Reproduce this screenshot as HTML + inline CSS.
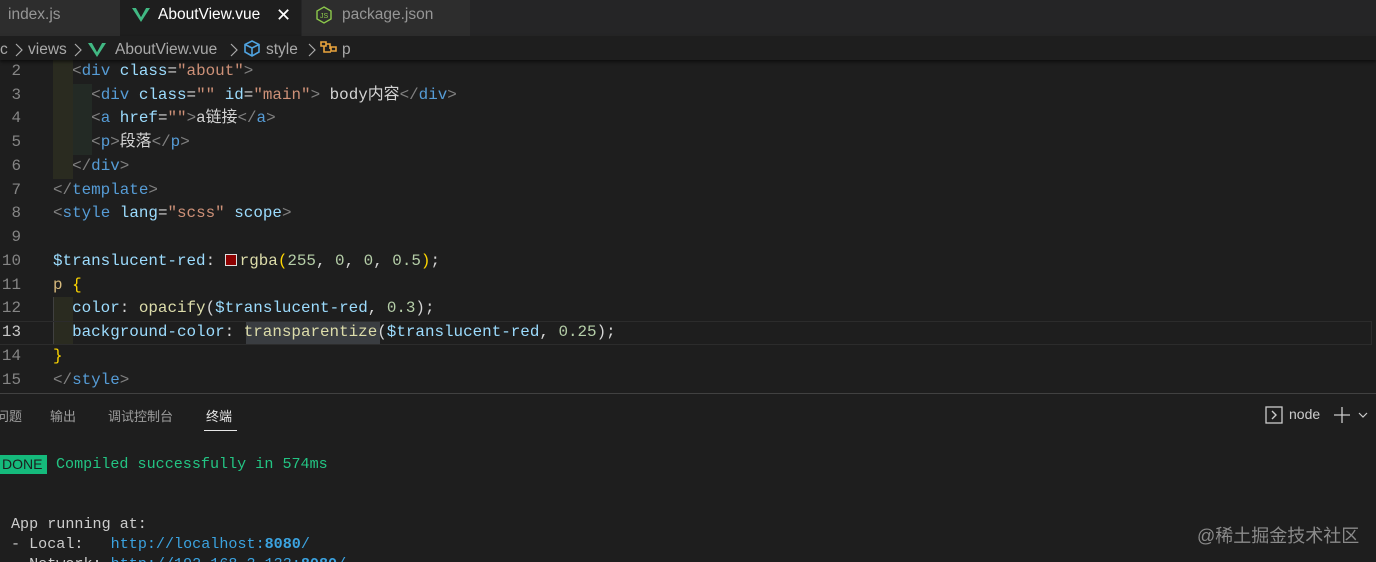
<!DOCTYPE html>
<html><head><meta charset="utf-8"><style>
*{margin:0;padding:0;box-sizing:border-box}
html,body{width:1376px;height:562px;overflow:hidden}
body{background:#1e1e1e;position:relative;font-family:"Liberation Sans","Noto Sans CJK SC",sans-serif;color:#ccc}
.tabs{position:absolute;left:0;top:0;width:1376px;height:36px;background:#252526}
.tab{position:absolute;top:0;height:36px;font-size:15.5px;line-height:30px;color:#969696}
.bc{position:absolute;top:36px;left:0;width:1376px;height:24px;background:#1e1e1e;font-size:15.5px;color:#a9a9a9;line-height:28px;box-shadow:0 2px 3px #0008;z-index:2}
.code{position:absolute;left:0;width:1376px;height:23.77px;font-family:"Liberation Mono","Noto Sans CJK SC",monospace;font-size:15.9px;line-height:23.77px;white-space:pre;color:#d4d4d4}
.ln{position:absolute;left:0;width:21px;text-align:right;color:#858585}
.tx{position:absolute;left:53px}
.g{color:#808080}.t{color:#569cd6}.a{color:#9cdcfe}.s{color:#ce9178}.f{color:#dcdcaa}.y{color:#ffd700}.sel{color:#d7ba7d}.n{color:#b5cea8}
.term{position:absolute;font-family:"Liberation Mono",monospace;font-size:15.1px;white-space:pre;color:#ccc}
.chev{position:absolute;top:7px}
</style></head><body>
<div class="tabs">
 <div class="tab" style="left:0;width:120px;background:#2d2d2d;padding-left:8px">index.js</div>
 <div class="tab" style="left:120px;width:181px;background:#1e1e1e;color:#fff;padding-left:38px">AboutView.vue<span style="position:absolute;left:156px;font-size:18px">✕</span>
  <svg style="position:absolute;left:12px;top:8px" width="18" height="14" viewBox="0 0 18 14"><path d="M0 0h4l5 9 5-9h4L9 14z" fill="#41b883"/><path d="M4 0h3l2 3.5L11 0h3L9 9z" fill="#1e1e1e"/></svg></div>
 <div class="tab" style="left:302px;width:168px;background:#2d2d2d;padding-left:40px">package.json
  <svg style="position:absolute;left:14px;top:6px" width="16" height="18" viewBox="0 0 16 18"><path d="M8 1l7 4v8l-7 4-7-4V5z" fill="none" stroke="#8cc84b" stroke-width="1.4"/><text x="4" y="12" font-size="7" fill="#8cc84b" font-family="Liberation Sans">JS</text></svg></div>
</div>
<div class="bc"><span style="position:absolute;left:0">c</span>
 <svg class="chev" style="left:15px" width="8" height="14" viewBox="0 0 8 14"><path d="M1 1l6 6-6 6" fill="none" stroke="#aaa" stroke-width="1.2"/></svg>
 <span style="position:absolute;left:28px">views</span>
 <svg class="chev" style="left:74px" width="8" height="14" viewBox="0 0 8 14"><path d="M1 1l6 6-6 6" fill="none" stroke="#aaa" stroke-width="1.2"/></svg>
 <svg style="position:absolute;left:88px;top:7px" width="18" height="14" viewBox="0 0 18 14"><path d="M0 0h4l5 9 5-9h4L9 14z" fill="#41b883"/><path d="M4 0h3l2 3.5L11 0h3L9 9z" fill="#1e1e1e"/></svg>
 <span style="position:absolute;left:115px">AboutView.vue</span>
 <svg class="chev" style="left:230px" width="8" height="14" viewBox="0 0 8 14"><path d="M1 1l6 6-6 6" fill="none" stroke="#aaa" stroke-width="1.2"/></svg>
 <svg style="position:absolute;left:243px;top:4px" width="18" height="17" viewBox="0 0 18 17"><path d="M9 1l7 3.5v7.5l-7 4-7-4V4.5z M2 4.5l7 3.5 7-3.5 M9 8v8" fill="none" stroke="#4fa3e0" stroke-width="1.6"/></svg>
 <span style="position:absolute;left:266px">style</span>
 <svg class="chev" style="left:308px" width="8" height="14" viewBox="0 0 8 14"><path d="M1 1l6 6-6 6" fill="none" stroke="#aaa" stroke-width="1.2"/></svg>
 <svg style="position:absolute;left:320px;top:4px" width="18" height="16" viewBox="0 0 18 16"><path d="M1 2h5v4H1z M11 7h5v4h-5z M4 6v6h7 M6 4h4v5" fill="none" stroke="#e8a33d" stroke-width="1.6"/></svg>
 <span style="position:absolute;left:342px">p</span></div>

<div style="position:absolute;left:53px;top:60px;width:20px;height:119px;background:#2a2b20"></div>
<div style="position:absolute;left:73px;top:84px;width:19px;height:71px;background:#232a25"></div>
<div style="position:absolute;left:53px;top:297px;width:20px;height:48px;border-left:1px solid #404040;background:#2a2b20"></div>
<div style="position:absolute;left:0;top:321px;width:1372px;height:24px;border:1px solid #2c2c2c;border-left:0"></div>
<div style="position:absolute;left:246px;top:322px;width:134px;height:22px;background:#3a3d41"></div>

<div class="code" style="top:60px"><span class="ln">2</span><span class="tx">  <span class="g">&lt;</span><span class="t">div</span> <span class="a">class</span>=<span class="s">"about"</span><span class="g">&gt;</span></span></div>
<div class="code" style="top:84px"><span class="ln">3</span><span class="tx">    <span class="g">&lt;</span><span class="t">div</span> <span class="a">class</span>=<span class="s">""</span> <span class="a">id</span>=<span class="s">"main"</span><span class="g">&gt;</span> body内容<span class="g">&lt;/</span><span class="t">div</span><span class="g">&gt;</span></span></div>
<div class="code" style="top:107px"><span class="ln">4</span><span class="tx">    <span class="g">&lt;</span><span class="t">a</span> <span class="a">href</span>=<span class="s">""</span><span class="g">&gt;</span>a链接<span class="g">&lt;/</span><span class="t">a</span><span class="g">&gt;</span></span></div>
<div class="code" style="top:131px"><span class="ln">5</span><span class="tx">    <span class="g">&lt;</span><span class="t">p</span><span class="g">&gt;</span>段落<span class="g">&lt;/</span><span class="t">p</span><span class="g">&gt;</span></span></div>
<div class="code" style="top:155px"><span class="ln">6</span><span class="tx">  <span class="g">&lt;/</span><span class="t">div</span><span class="g">&gt;</span></span></div>
<div class="code" style="top:179px"><span class="ln">7</span><span class="tx"><span class="g">&lt;/</span><span class="t">template</span><span class="g">&gt;</span></span></div>
<div class="code" style="top:202px"><span class="ln">8</span><span class="tx"><span class="g">&lt;</span><span class="t">style</span> <span class="a">lang</span>=<span class="s">"scss"</span> <span class="a">scope</span><span class="g">&gt;</span></span></div>
<div class="code" style="top:226px"><span class="ln">9</span></div>
<div class="code" style="top:250px"><span class="ln">10</span><span class="tx"><span class="a">$translucent-red</span>: <span style="display:inline-block;width:12px;height:12px;border:1px solid #ddd;background:#8b0000;vertical-align:-1px;margin-right:3px"></span><span class="f">rgba</span><span class="y">(</span><span class="n">255</span>, <span class="n">0</span>, <span class="n">0</span>, <span class="n">0.5</span><span class="y">)</span>;</span></div>
<div class="code" style="top:274px"><span class="ln">11</span><span class="tx"><span class="sel">p</span> <span class="y">{</span></span></div>
<div class="code" style="top:297px"><span class="ln">12</span><span class="tx">  <span class="a">color</span>: <span class="f">opacify</span>(<span class="a">$translucent-red</span>, <span class="n">0.3</span>);</span></div>
<div class="code" style="top:321px"><span class="ln" style="color:#c6c6c6">13</span><span class="tx">  <span class="a">background-color</span>: <span class="f">transparentize</span>(<span class="a">$translucent-red</span>, <span class="n">0.25</span>);</span></div>
<div class="code" style="top:345px"><span class="ln">14</span><span class="tx"><span class="y">}</span></span></div>
<div class="code" style="top:369px"><span class="ln">15</span><span class="tx"><span class="g">&lt;/</span><span class="t">style</span><span class="g">&gt;</span></span></div>

<div style="position:absolute;left:0;top:393px;width:1376px;height:170px;background:#1e1e1e;border-top:1px solid #414141"></div>
<div style="position:absolute;top:406px;left:0;font-size:13px;color:#9d9d9d;width:600px">
 <span style="position:absolute;left:-4px">问题</span><span style="position:absolute;left:50px">输出</span><span style="position:absolute;left:108px">调试控制台</span><span style="position:absolute;left:206px;color:#e7e7e7">终端</span></div>
<div style="position:absolute;left:204px;top:430px;width:33px;height:1px;background:#e7e7e7"></div>
<svg style="position:absolute;left:1265px;top:406px" width="19" height="19" viewBox="0 0 19 19"><rect x="1" y="1" width="16" height="16" fill="none" stroke="#ccc" stroke-width="1.3"/><path d="M7 5l4 4-4 4" fill="none" stroke="#ccc" stroke-width="1.4"/></svg>
<div style="position:absolute;left:1289px;top:406px;font-size:14px;color:#ccc">node</div>
<svg style="position:absolute;left:1333px;top:405px" width="40" height="20" viewBox="0 0 40 20"><path d="M9 2v16M1 10h16" stroke="#ccc" stroke-width="1.3"/><path d="M26 8l4 4 4-4" fill="none" stroke="#ccc" stroke-width="1.2"/></svg>

<div style="position:absolute;left:0;top:455px;width:47px;height:19px;background:#15ba7c"></div>
<div class="term" style="left:2px;top:455px;line-height:19px;color:#1e1e1e;font-family:'Liberation Sans',sans-serif;font-size:14px">DONE</div>
<div class="term" style="left:56px;top:454px;line-height:20px;color:#23c483">Compiled successfully in 574ms</div>
<div class="term" style="left:11px;top:514px;line-height:20px">App running at:</div>
<div class="term" style="left:11px;top:534px;line-height:20px">- Local:   <span style="color:#3ba3e0">http://localhost:<b>8080</b>/</span></div>
<div class="term" style="left:11px;top:554px;line-height:20px">- Network: <span style="color:#3ba3e0">http://192.168.3.133:<b>8080</b>/</span></div>
<div style="position:absolute;left:1197px;top:522px;font-size:18px;color:#8a8a8a">@稀土掘金技术社区</div>
</body></html>
